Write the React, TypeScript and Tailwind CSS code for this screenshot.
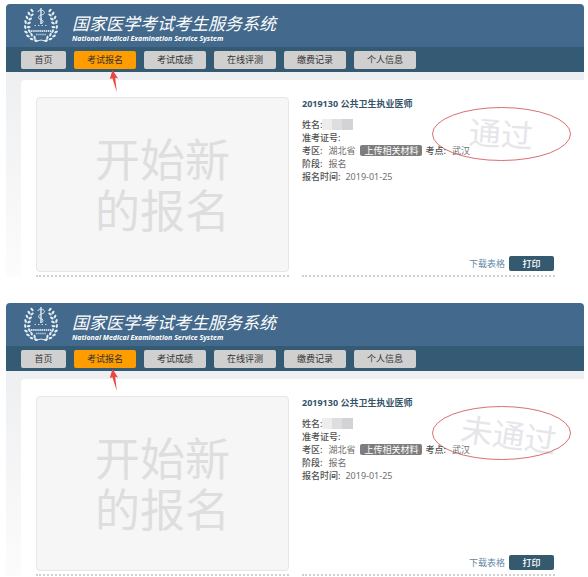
import React from "react";

const NAV_ITEMS = ["首页", "考试报名", "考试成绩", "在线评测", "缴费记录", "个人信息"];
const ACTIVE_ITEM = "考试报名";

// Leaves of the left laurel branch: [x, y, angle]
const LEAVES: [number, number, number][] = [
  [9, 3.5, 45],
  [6, 6.5, 55],
  [9, 8, -40],
  [4, 10.5, 60],
  [7.2, 12, -30],
  [2.6, 15, 70],
  [6, 16, -25],
  [2.2, 20, 80],
  [5.6, 20.2, -10],
  [3, 25, 30],
  [6.4, 24.2, 60],
  [5, 29, 25],
  [8.6, 27.6, 70],
  [8.5, 32, 20],
  [11.6, 30.5, 80],
  [13, 33.6, 15],
];

function Branch() {
  return (
    <g fill="#e3eef5">
      {LEAVES.map(([x, y, a], i) => (
        <ellipse key={i} cx={x} cy={y} rx="2" ry="1.1" transform={`rotate(${a} ${x} ${y})`} />
      ))}
    </g>
  );
}

function Emblem() {
  return (
    <svg viewBox="0 0 36 36" className="h-9 w-9 shrink-0" aria-hidden="true">
      <Branch />
      <g transform="translate(36 0) scale(-1 1)">
        <Branch />
      </g>
      <g stroke="#e3eef5" fill="none">
        <path d="M18 1v16" strokeWidth="1.4" />
        <path d="M15 5c0-3 6.500-2 6.500.5S15.500 8 15.500 10.500s4.500 1.500 4.500 4-2.500 1.500-2.500 2.500" strokeWidth="1" />
        <path d="M11.500 18.500h13" strokeWidth="1.200" strokeDasharray="1.500 2" opacity=".8" />
        <path d="M8 24h20" strokeWidth="2" strokeDasharray="1.500 .6" opacity=".85" />
        <path d="M13 27.500h10" strokeWidth="1.500" strokeDasharray="1.500 .6" opacity=".7" />
        <path d="M12 34.500q6 -3 12 0" strokeWidth="1" />
      </g>
    </svg>
  );
}

function Header() {
  return (
    <header className="flex h-[43px] items-start gap-[13px] rounded-t bg-[#43698c] pt-[3px] pl-[17px]">
      <Emblem />
      <div className="pt-[6px] whitespace-nowrap text-white italic">
        <h1 className="text-[17px] leading-[22px]">国家医学考试考生服务系统</h1>
        <p className="text-[7px] leading-[8px] font-bold">National Medical Examination Service System</p>
      </div>
    </header>
  );
}

function Pointer() {
  return (
    <svg viewBox="0 0 10 22" className="absolute top-[19px] left-[35px] z-10 h-[22px] w-[10px]" aria-hidden="true">
      <path d="M3.500 0L9 8.500L6.200 7.800L7.800 22L3.400 8.300L.8 9z" fill="#ea4540" />
    </svg>
  );
}

function Nav() {
  return (
    <nav className="flex h-[25px] gap-2 bg-[#345a74] pt-1 pl-[15px]">
      {NAV_ITEMS.map((item) => {
        const active = item === ACTIVE_ITEM;
        return (
          <div key={item} className="relative">
            <button
              type="button"
              className={`block h-[18px] rounded-xs text-[9px] leading-[18px] text-[#333] ${
                item === "首页" ? "w-[45px]" : "w-[62px]"
              } ${active ? "bg-[#ff9d00]" : "bg-[#d0d0d0]"}`}
            >
              {item}
            </button>
            {active && <Pointer />}
          </div>
        );
      })}
    </nav>
  );
}

function Label({ children }: { children: React.ReactNode }) {
  return <dt className="font-medium text-[#505050]">{children}</dt>;
}

function Stamp({ text, placement }: { text: string; placement: string }) {
  return (
    <div className="pointer-events-none absolute top-[10px] right-[-16px] flex h-[54px] w-[139px] items-center justify-center">
      <span className={`text-[32px] leading-none whitespace-nowrap text-[#e6e6ea] ${placement}`}>{text}</span>
      <svg viewBox="0 0 139 54" className="absolute inset-0 h-full w-full" aria-hidden="true">
        <ellipse cx="69.500" cy="27" rx="69" ry="26.500" fill="none" stroke="#d9706f" strokeWidth="1" />
      </svg>
    </div>
  );
}

function Registration({ result, placement }: { result: string; placement: string }) {
  return (
    <article className="relative flex flex-col border-b-2 border-dotted border-[#cfcfcf] text-[9px] leading-[13px] text-[#707070]">
      <Stamp text={result} placement={placement} />
      <h2 className="relative font-bold text-[#355468]">2019130 公共卫生执业医师</h2>
      <dl className="relative mt-[8px] whitespace-nowrap">
        <div className="flex items-center">
          <Label>姓名:</Label>
          <dd className="flex h-[11px]" aria-label="已隐藏">
            <span className="w-[10px] bg-[#ededed]" />
            <span className="w-[10px] bg-[#dedee0]" />
            <span className="w-[11px] bg-[#d3d3d6]" />
          </dd>
        </div>
        <div className="flex">
          <Label>准考证号:</Label>
        </div>
        <div className="flex items-center">
          <Label>考区:</Label>
          <dd className="ml-[6px]">湖北省</dd>
          <dd className="ml-[5px]">
            <button type="button" className="block h-[11px] w-[62px] rounded-xs bg-[#7d7d7d] text-[9px] leading-[11px] text-white">
              上传相关材料
            </button>
          </dd>
          <dt className="ml-[3px] font-medium text-[#505050]">考点:</dt>
          <dd className="ml-[6px]">武汉</dd>
        </div>
        <div className="flex gap-[6px]">
          <Label>阶段:</Label>
          <dd>报名</dd>
        </div>
        <div className="flex gap-[5px]">
          <Label>报名时间:</Label>
          <dd>2019-01-25</dd>
        </div>
      </dl>
      <div className="mt-auto mb-[4px] flex items-center justify-end gap-1 pr-px">
        <a href="#download" className="text-[#6587a3]">下载表格</a>
        <button type="button" className="h-[15px] w-[45px] rounded-xs bg-[#35596f] text-[9px] leading-[15px] font-medium text-white">
          打印
        </button>
      </div>
    </article>
  );
}

function Screen({ result, placement }: { result: string; placement: string }) {
  return (
    <section>
      <Header />
      <Nav />
      <div className="bg-linear-to-b from-[#eeeff1] to-[#fcfcfc] pt-2 pl-[15px]">
        <main className="grid grid-cols-2 gap-[13px] rounded-tl bg-white pt-[17px] pr-[29px] pl-[15px]">
          <div className="border-b-2 border-dotted border-[#cfcfcf] pb-[3px]">
            <button
              type="button"
              className="block h-[175px] w-full rounded-sm border border-[#e6e6e6] bg-[#f6f6f6] text-[45px] leading-[51px] text-[#dedede]"
            >
              开始新
              <br />
              的报名
            </button>
          </div>
          <Registration result={result} placement={placement} />
        </main>
      </div>
    </section>
  );
}

export default function App() {
  return (
    <div className="flex flex-col gap-[26px] bg-white pt-1 pr-1 pl-[6px] font-['Noto_Sans','Noto_Sans_CJK_SC',sans-serif]">
      <Screen result="通过" placement="rotate-4" />
      <Screen result="未通过" placement="ml-4 pt-1 rotate-8" />
    </div>
  );
}
